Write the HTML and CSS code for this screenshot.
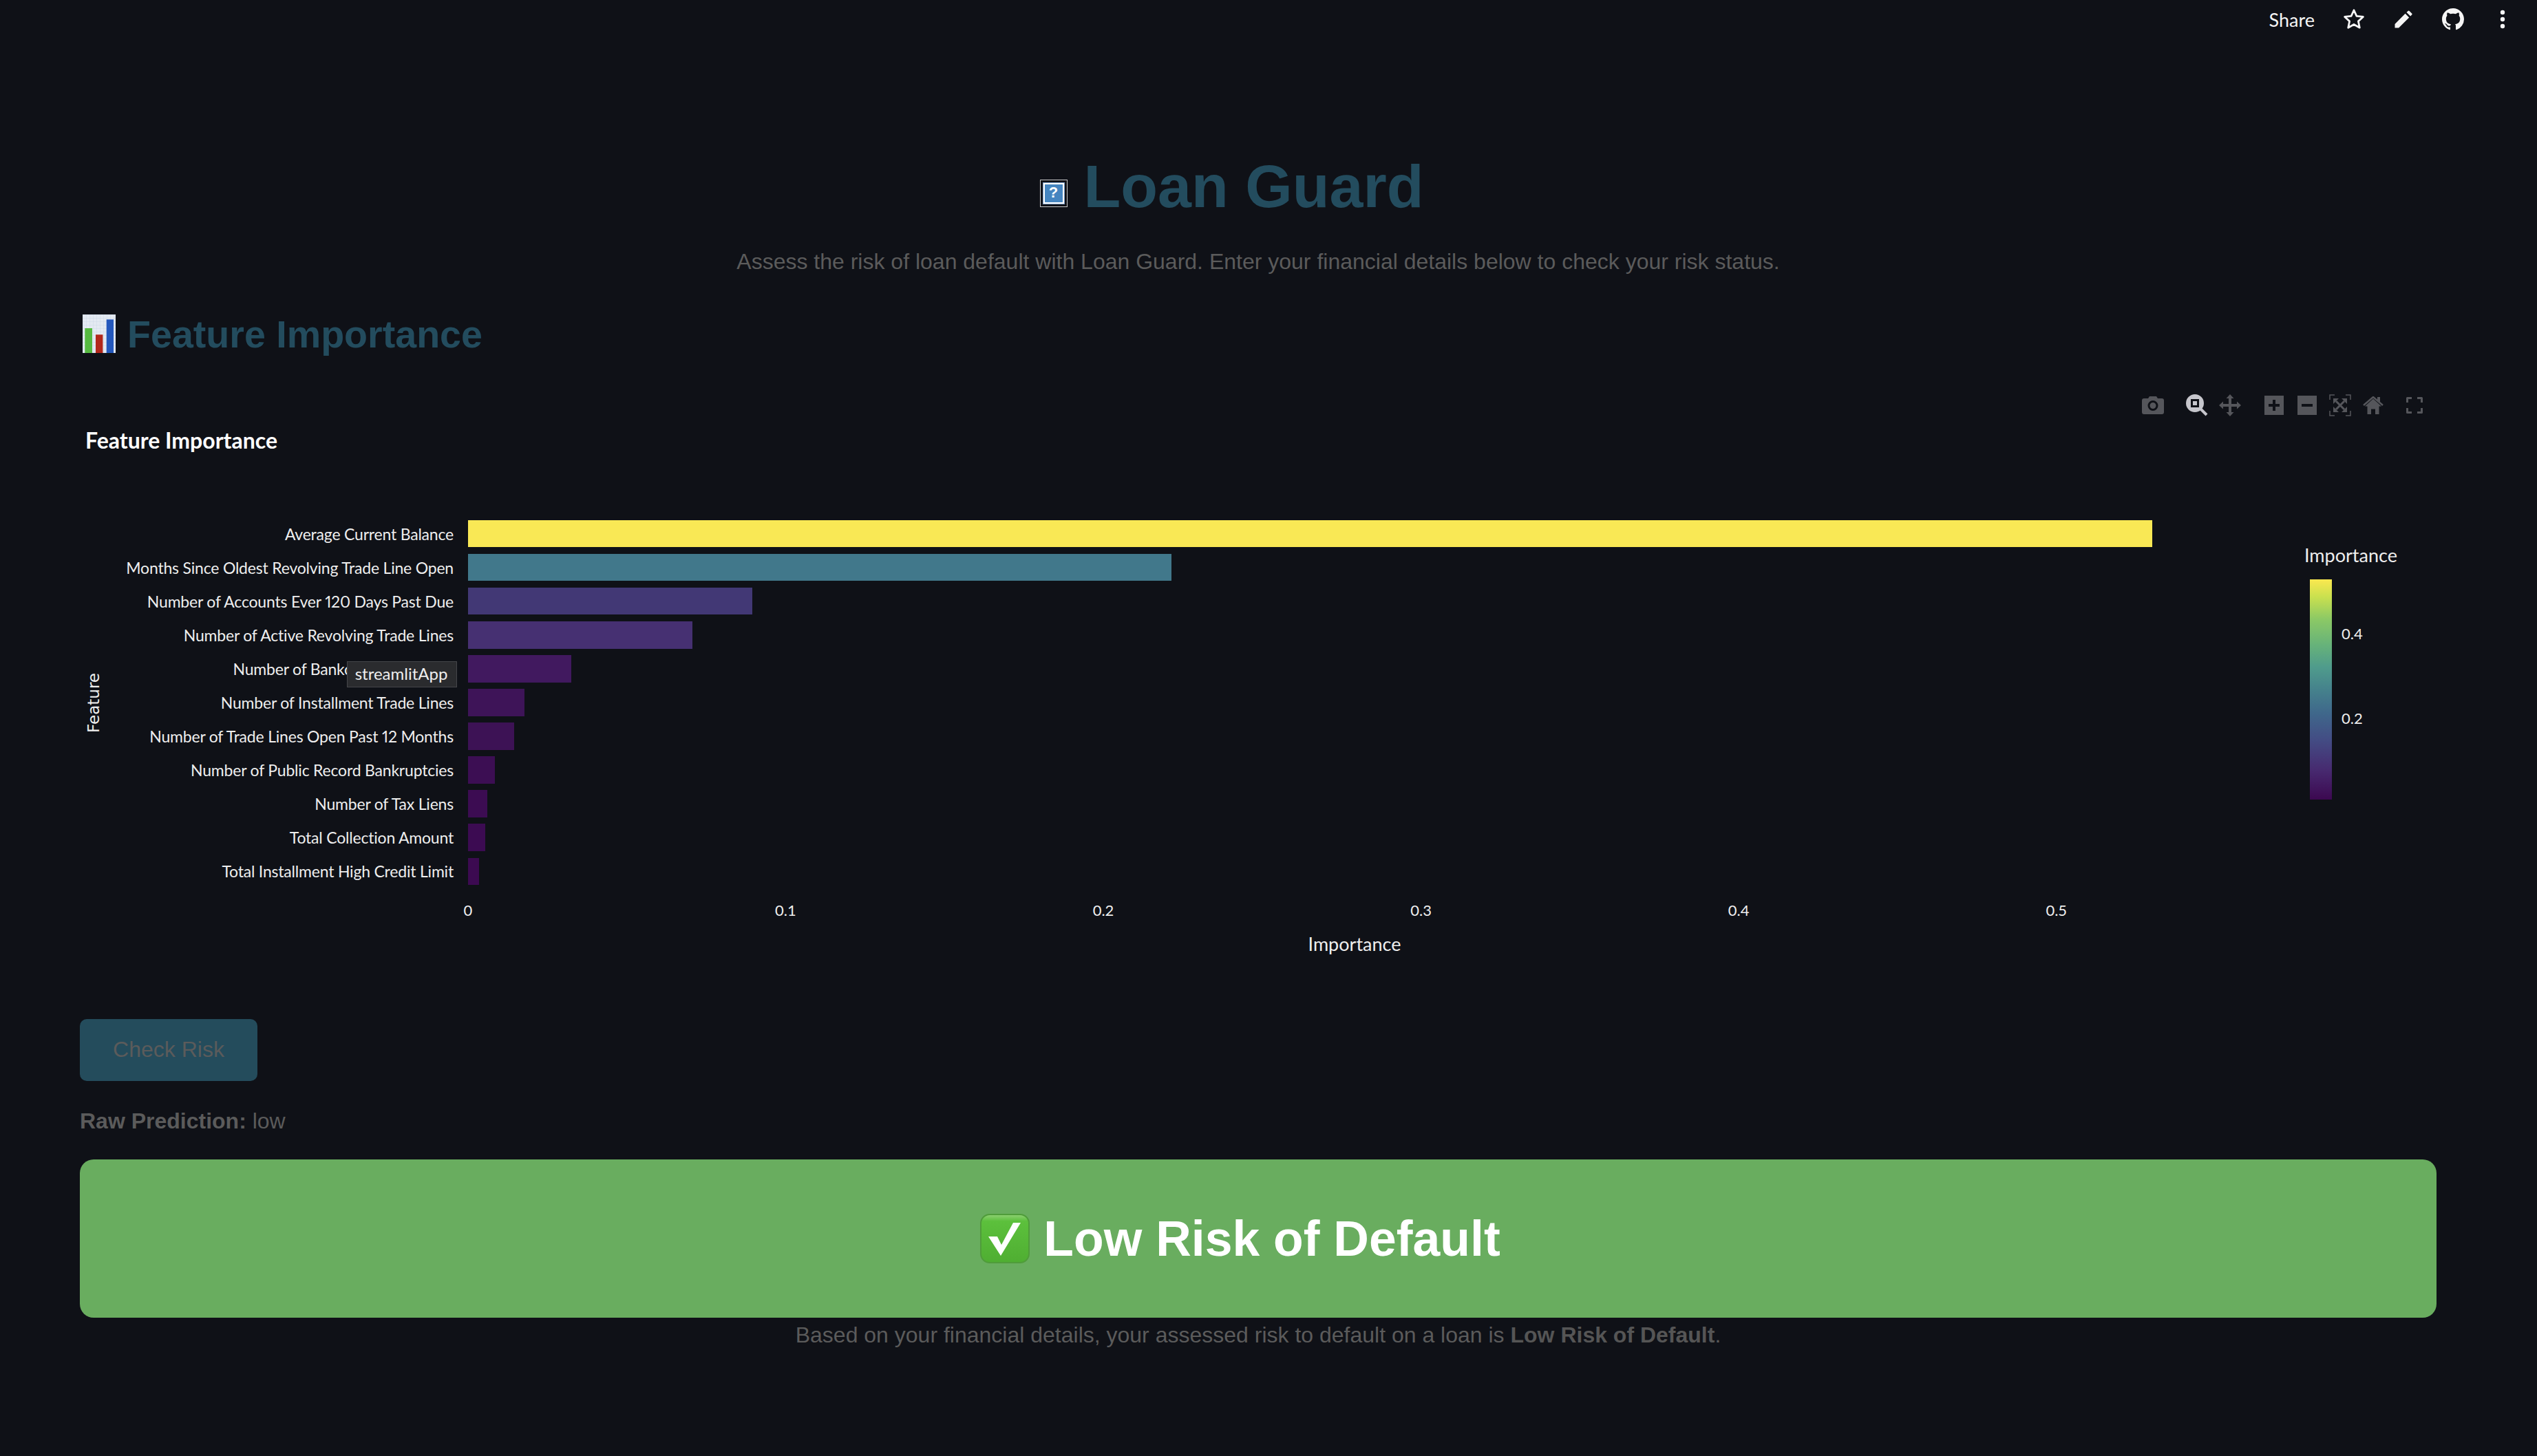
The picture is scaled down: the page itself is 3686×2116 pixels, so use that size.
FILE: index.html
```html
<!DOCTYPE html>
<html>
<head>
    <title>Loan Guard</title>
    <link rel="stylesheet" href="styles.css">
</head>
<body>
    <header class="toolbar">
        <span class="share">Share</span>
        <span class="tool-btn">
            <svg width="34" height="34" viewBox="0 0 32 32"><path d="M16 3.500l3.700 8.200 8.900 1-6.600 6 1.800 8.800-7.800-4.500-7.800 4.500 1.800-8.800-6.600-6 8.900-1z" fill="none" stroke="#f5f5f5" stroke-width="2.600" stroke-linejoin="round"/></svg>
        </span>
        <span class="tool-btn">
            <svg width="26" height="26" viewBox="0 0 26 26"><path d="M0.500 25.500v-5.600L15.600 4.800l5.600 5.600L6.100 25.500zM17.500 2.900l2-2a1.500 1.500 0 0 1 2.100 0l3.500 3.500a1.500 1.500 0 0 1 0 2.100l-2 2z" fill="#f5f5f5"/></svg>
        </span>
        <span class="tool-btn">
            <svg width="32" height="32" viewBox="0 0 16 16"><path fill="#f5f5f5" d="M8 0C3.580 0 0 3.580 0 8c0 3.540 2.290 6.530 5.470 7.590.4.070.55-.17.55-.38 0-.19-.01-.82-.01-1.490-2.010.37-2.530-.49-2.690-.94-.09-.23-.48-.94-.82-1.130-.28-.15-.68-.52-.01-.53.63-.01 1.080.58 1.230.82.72 1.210 1.870.87 2.330.66.070-.52.28-.87.51-1.070-1.780-.2-3.640-.89-3.640-3.950 0-.87.31-1.590.82-2.150-.08-.2-.36-1.020.08-2.120 0 0 .67-.21 2.200.82.64-.18 1.320-.27 2-.27s1.360.09 2 .27c1.530-1.040 2.200-.82 2.200-.82.44 1.100.16 1.920.08 2.120.51.56.82 1.270.82 2.150 0 3.070-1.870 3.750-3.650 3.950.29.25.54.73.54 1.480 0 1.070-.01 1.930-.01 2.200 0 .21.15.46.55.38A8.010 8.010 0 0 0 16 8c0-4.420-3.580-8-8-8z"/></svg>
        </span>
        <span class="tool-btn">
            <svg width="14" height="28" viewBox="0 0 14 28"><circle cx="7" cy="4" r="3.200" fill="#f5f5f5"/><circle cx="7" cy="14" r="3.200" fill="#f5f5f5"/><circle cx="7" cy="24" r="3.200" fill="#f5f5f5"/></svg>
        </span>
    </header>

    <main class="main">
        <h1 class="title">
            <span class="missing-emoji"><span class="missing-inner"><span class="missing-core">?</span></span></span>
            <span>Loan Guard</span>
        </h1>
        <p class="subtitle">Assess the risk of loan default with Loan Guard. Enter your financial details below to check your risk status.</p>

        <h2 class="section-title">
            <svg class="chart-emoji" width="48" height="56" viewBox="0 0 48 56">
                <defs>
                    <pattern id="paper" width="5" height="5" patternUnits="userSpaceOnUse">
                        <rect width="5" height="5" fill="#e4eaf2"/>
                        <path d="M0 0H5M0 0V5" stroke="#c6d3e2" stroke-width="0.7"/>
                    </pattern>
                </defs>
                <rect width="48" height="56" fill="url(#paper)"/>
                <rect x="3.300" y="20" width="10.700" height="36" fill="#55b940"/>
                <rect x="19" y="29.300" width="10.400" height="26.700" fill="#b2281b"/>
                <rect x="34.700" y="7.300" width="10.300" height="48.700" fill="#2458bd"/>
            </svg>
            <span class="section-text">Feature Importance</span>
        </h2>

        <section class="chart">
            <div class="modebar">
                <span class="mode-btn">
                    <svg width="32" height="26" viewBox="0 0 32 26"><path fill="#55565b" fill-rule="evenodd" d="M3 3h6l2-3h10l2 3h6a3 3 0 0 1 3 3v17a3 3 0 0 1-3 3H3a3 3 0 0 1-3-3V6a3 3 0 0 1 3-3zM16 6a7.500 7.500 0 1 0 0 15 7.500 7.500 0 0 0 0-15zM16 9a4.500 4.500 0 1 1 0 9 4.500 4.500 0 0 1 0-9z"/></svg>
                </span>
                <span class="mode-group">
                    <span class="mode-btn">
                        <svg width="32" height="32" viewBox="0 0 32 32"><path fill="#c6c6cc" fill-rule="evenodd" d="M13 0a13 13 0 1 1 0 26 13 13 0 0 1 0-26zM7 7v12h12V7zM10 10h6v6h-6z"/><path d="M21 21l9 9" stroke="#c6c6cc" stroke-width="4"/></svg>
                    </span>
                    <span class="mode-btn">
                        <svg width="32" height="32" viewBox="0 0 32 32"><path fill="#55565b" d="M16 0l5.500 6H18v8h8V10.500l6 5.500-6 5.500V18h-8v8h3.500L16 32l-5.500-6H14v-8H6v3.500L0 16l6-5.500V14h8V6h-3.500z"/></svg>
                    </span>
                </span>
                <span class="mode-group">
                    <span class="mode-btn">
                        <svg width="28" height="28" viewBox="0 0 28 28"><path fill="#55565b" fill-rule="evenodd" d="M0 0h28v28H0zM12 6v6H6v4h6v6h4v-6h6v-4h-6V6z"/></svg>
                    </span>
                    <span class="mode-btn">
                        <svg width="28" height="28" viewBox="0 0 28 28"><path fill="#55565b" fill-rule="evenodd" d="M0 0h28v28H0zM6 12v4h16v-4z"/></svg>
                    </span>
                    <span class="mode-btn">
                        <svg width="32" height="32" viewBox="0 0 32 32"><path d="M8 1H1v7M24 1h7v7M8 31H1v-7M24 31h7v-7" fill="none" stroke="#55565b" stroke-width="1.500"/><path d="M10 10l12 12M22 10L10 22" stroke="#55565b" stroke-width="3"/><path fill="#55565b" d="M6 6h8l-8 8zM26 6v8l-8-8zM6 26v-8l8 8zM26 26h-8l8-8z"/></svg>
                    </span>
                    <span class="mode-btn">
                        <svg width="30" height="26" viewBox="0 0 30 26"><path fill="#55565b" d="M15 3.500L27 14.500h-3.500V26H18v-7.500h-6V26H6.500V14.500H3z"/><path fill="none" stroke="#55565b" stroke-width="2.500" d="M1 13L15 1l14 12"/><rect x="21" y="1" width="4" height="7" fill="#55565b"/></svg>
                    </span>
                </span>
                <span class="mode-group mode-group-last">
                    <span class="mode-btn">
                        <svg width="24" height="24" viewBox="0 0 24 24"><path d="M8 1.500H1.500V8M16 1.500h6.500V8M8 22.500H1.500V16M16 22.500h6.500V16" fill="none" stroke="#55565b" stroke-width="3" stroke-linejoin="round"/></svg>
                    </span>
                </span>
            </div>

            <div class="chart-title">Feature Importance</div>

            <div class="chart-body">
                <div class="y-title"><span>Feature</span></div>
                <div class="plot">
                    <div class="bar-row"><span class="bar-label">Average Current Balance</span><span class="bar" style="width:2447px;background:#f9e855"></span></div>
                    <div class="bar-row"><span class="bar-label">Months Since Oldest Revolving Trade Line Open</span><span class="bar" style="width:1022px;background:#41788b"></span></div>
                    <div class="bar-row"><span class="bar-label">Number of Accounts Ever 120 Days Past Due</span><span class="bar" style="width:413px;background:#423875"></span></div>
                    <div class="bar-row"><span class="bar-label">Number of Active Revolving Trade Lines</span><span class="bar" style="width:326px;background:#463072"></span></div>
                    <div class="bar-row"><span class="bar-label">Number of Bankcard Trade Lines</span><span class="bar" style="width:150px;background:#41195f"></span></div>
                    <div class="bar-row"><span class="bar-label">Number of Installment Trade Lines</span><span class="bar" style="width:82px;background:#3e1458"></span></div>
                    <div class="bar-row"><span class="bar-label">Number of Trade Lines Open Past 12 Months</span><span class="bar" style="width:67px;background:#3d1255"></span></div>
                    <div class="bar-row"><span class="bar-label">Number of Public Record Bankruptcies</span><span class="bar" style="width:39px;background:#3c0e53"></span></div>
                    <div class="bar-row"><span class="bar-label">Number of Tax Liens</span><span class="bar" style="width:28px;background:#3c0c52"></span></div>
                    <div class="bar-row"><span class="bar-label">Total Collection Amount</span><span class="bar" style="width:25px;background:#3c0b52"></span></div>
                    <div class="bar-row"><span class="bar-label">Total Installment High Credit Limit</span><span class="bar" style="width:16px;background:#3c0a51"></span></div>

                    <div class="x-ticks">
                        <span>0</span><span>0.1</span><span>0.2</span><span>0.3</span><span>0.4</span><span>0.5</span>
                    </div>
                    <div class="x-title">Importance</div>
                </div>
                <div class="legend">
                    <div class="legend-title">Importance</div>
                    <div class="legend-scale">
                        <div class="colorbar"></div>
                        <div class="legend-ticks"><span>0.4</span><span>0.2</span></div>
                    </div>
                </div>
            </div>

            <div class="tooltip">streamlitApp</div>
        </section>

        <button class="check-btn">Check Risk</button>
        <p class="raw"><b>Raw Prediction:</b> low</p>

        <div class="result">
            <svg width="72" height="72" viewBox="0 0 72 72">
                <defs>
                    <linearGradient id="checkBg" x1="0" y1="0" x2="0" y2="1">
                        <stop offset="0" stop-color="#8fd074"/>
                        <stop offset="0.14" stop-color="#5cc03c"/>
                        <stop offset="1" stop-color="#4fae32"/>
                    </linearGradient>
                </defs>
                <rect x="1" y="1" width="70" height="70" rx="13" fill="url(#checkBg)" stroke="#4f9c3a" stroke-width="2"/>
                <path d="M12 33h13l6 12 17-32h11L30 61z" fill="#fff"/>
            </svg>
            <span>Low Risk of Default</span>
        </div>
        <p class="summary">Based on your financial details, your assessed risk to default on a loan is <b>Low Risk of Default</b>.</p>
    </main>
</body>
</html>
```

FILE: styles.css
```css
html, body {
    height: 2116px;
    overflow: hidden;
}
body {
    margin: 0;
    padding: 0;
    background-color: #0f1117;
    font-family: "Liberation Sans", Arial, sans-serif;
}

/* top bar */
.toolbar {
    display: flex;
    justify-content: flex-end;
    align-items: center;
    height: 56px;
    padding-right: 14px;
}
.share {
    margin-right: 21px;
    font-family: Lato, sans-serif;
    font-size: 27px;
    color: #f5f5f5;
}
.tool-btn {
    display: flex;
    justify-content: center;
    align-items: center;
    width: 72px;
}

.main {
    padding: 0 146px 0 116px;
}

/* headings */
.title {
    display: flex;
    justify-content: center;
    align-items: center;
    gap: 24px;
    height: 100px;
    margin: 165px 0 0;
    padding-right: 77px;
    font-size: 88px;
    color: #234c5e;
}
.missing-emoji {
    display: flex;
    box-sizing: border-box;
    width: 40px;
    height: 40px;
    margin-top: 20px;
    padding: 3px;
    border: 1.5px solid #c8c8c8;
}
.missing-inner {
    display: flex;
    flex: 1;
    padding: 1px;
    background: #7b9cc4;
}
.missing-core {
    flex: 1;
    border: 2px solid #fff;
    background: #4585c0;
    color: #fff;
    font-size: 22px;
    line-height: 24px;
    text-align: center;
}
.subtitle {
    height: 44px;
    margin: 37px 0 0;
    font-size: 32px;
    line-height: 44px;
    text-align: center;
    color: #5b5b5b;
}
.section-title {
    display: flex;
    align-items: center;
    gap: 17px;
    height: 70px;
    margin: 48px 0 0 4px;
    font-size: 55.6px;
    color: #234c5e;
}
.section-text {
    padding-top: 2px;
}

/* chart */
.chart {
    position: relative;
    margin-top: 39px;
    padding-top: 61px;
    font-family: Lato, sans-serif;
    color: #eee;
}
.modebar {
    position: absolute;
    top: 4px;
    right: 8px;
    display: flex;
}
.mode-group {
    display: flex;
    margin-left: 16px;
}
.mode-group-last {
    margin-left: 12px;
}
.mode-btn {
    display: flex;
    justify-content: center;
    align-items: center;
    width: 48px;
    height: 52px;
}
.chart-title {
    height: 40px;
    margin-left: 8px;
    font-size: 32px;
    font-weight: 700;
    line-height: 40px;
    color: #fff;
}
.chart-body {
    display: flex;
    margin-top: 91px;
}
.y-title {
    display: flex;
    justify-content: center;
    align-items: center;
    width: 40px;
    height: 540px;
    font-family: "DejaVu Sans", sans-serif;
    font-size: 23px;
}
.y-title span {
    writing-mode: vertical-rl;
    transform: rotate(180deg);
}
.plot {
    width: 3100px;
}
.bar-row {
    display: grid;
    grid-template-columns: 503px 2576px;
    column-gap: 21px;
    align-items: center;
    height: 49.09px;
}
.bar-label {
    font-size: 23px;
    font-feature-settings: "pnum";
    letter-spacing: -0.2px;
    text-align: right;
    white-space: nowrap;
}
.bar {
    display: block;
    height: 39.5px;
}
.x-ticks {
    display: flex;
    height: 30px;
    margin: 17px 0 0 293px;
    font-size: 22px;
    line-height: 30px;
}
.x-ticks span {
    width: 461.6px;
    text-align: center;
}
.x-title {
    width: 2576px;
    height: 34px;
    margin: 17px 0 0 524px;
    font-size: 27px;
    line-height: 34px;
    text-align: center;
}
.legend {
    margin: 39px 0 0 92px;
}
.legend-title {
    height: 34px;
    font-size: 27px;
    line-height: 34px;
    white-space: nowrap;
}
.legend-scale {
    display: flex;
    margin: 18px 0 0 8px;
}
.colorbar {
    width: 32px;
    height: 320px;
    background: linear-gradient(to top, #3c0850 0%, #47296f 13%, #434c84 27%, #3f678b 39%, #45828c 50%, #4f9b8c 60%, #66b27a 70%, #8cc965 82%, #c9e04f 92%, #fbe84f 100%);
}
.legend-ticks {
    display: flex;
    flex-direction: column;
    gap: 93px;
    padding: 64px 0 0 14px;
    font-size: 22px;
    line-height: 30px;
}
.tooltip {
    position: absolute;
    left: 388px;
    top: 402px;
    box-sizing: border-box;
    width: 160px;
    height: 38px;
    border: 1px solid #45464a;
    background: #2a2b2e;
    padding-right: 2px;
    font-size: 24px;
    line-height: 34px;
    text-align: center;
    color: #eee;
}

/* result */
.check-btn {
    display: block;
    width: 258px;
    height: 90px;
    margin-top: 92px;
    border: none;
    border-radius: 10px;
    background-color: #244c5c;
    font-family: "Liberation Sans", Arial, sans-serif;
    font-size: 32px;
    color: #5b5b5b;
}
.raw {
    height: 44px;
    margin: 36px 0 0;
    font-size: 32px;
    line-height: 44px;
    color: #5b5b5b;
}
.result {
    display: flex;
    justify-content: center;
    align-items: center;
    gap: 20px;
    height: 230px;
    margin-top: 34px;
    padding-right: 52px;
    border-radius: 20px;
    background-color: #69ad5f;
    font-size: 71.5px;
    font-weight: 700;
    color: #fff;
}
.summary {
    height: 40px;
    margin: 5px 0 0;
    font-size: 32px;
    line-height: 40px;
    text-align: center;
    color: #5b5b5b;
}
.summary b {
    color: #555;
}
```
